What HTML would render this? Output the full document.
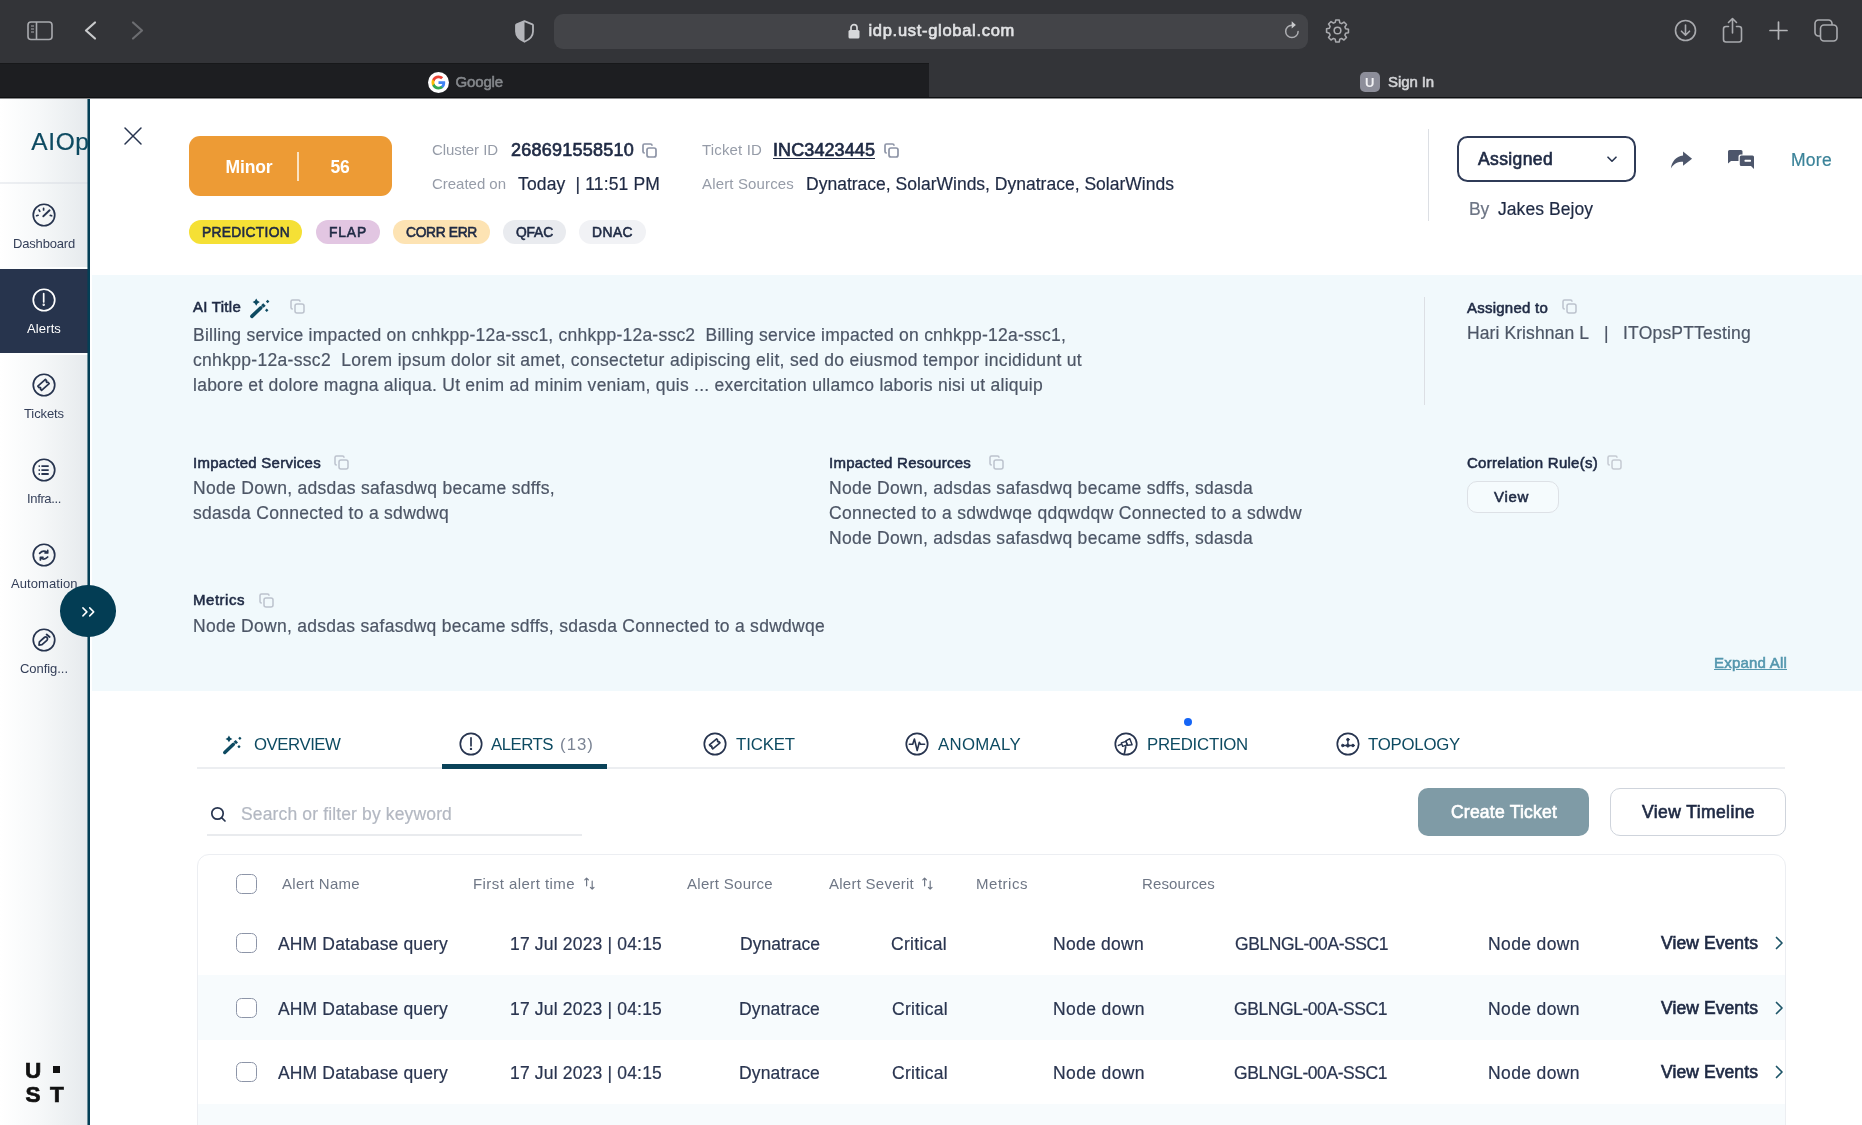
<!DOCTYPE html>
<html lang="en">
<head>
<meta charset="utf-8">
<title>AIOps - Alert Cluster</title>
<style>
*{box-sizing:border-box;margin:0;padding:0}
html,body{width:1862px;height:1125px;overflow:hidden;background:#fff}
body{font-family:"Liberation Sans",sans-serif;position:relative;color:#1f2a44}
#app{position:absolute;left:0;top:0;width:1862px;height:1125px;overflow:hidden;will-change:transform}
.t{position:absolute;white-space:nowrap;display:block}
.abs{position:absolute}
svg{position:absolute;overflow:visible}
/* browser chrome */
#toolbar{position:absolute;left:0;top:0;width:1862px;height:63px;background:#333438}
#urlbar{position:absolute;left:554px;top:14px;width:754px;height:35px;border-radius:9px;background:#434448}
#tabbar{position:absolute;left:0;top:63px;width:1862px;height:35.500px;background:#333438}
#tab1{position:absolute;left:0;top:0;width:929px;height:35.500px;background:#1d1e21;border-top:1px solid #17181a}
#chromeline{z-index:5;position:absolute;left:0;top:97px;width:1862px;height:2px;background:linear-gradient(180deg,#0e0f11 0,#0e0f11 1px,#8a8b8d 1px)}
/* sidebar */
#side{position:absolute;left:0;top:98px;width:88px;height:1027px;background:linear-gradient(90deg,#ffffff 0%,#f6f8f9 45%,#e6eaed 100%)}
#sideborder{position:absolute;left:87px;top:98px;width:3px;height:1027px;background:linear-gradient(90deg,rgba(4,63,86,.55) 0,rgba(4,63,86,.55) 1px,#043f56 1px)}
#side .sep{position:absolute;left:0;top:83.500px;width:88px;height:2px;background:linear-gradient(90deg,#eef0f3,#dfe3e8)}
#side .active{position:absolute;left:0;top:169px;width:88px;height:88px;background:#27344d;border-top:2px solid #fdfefe;border-bottom:2px solid #fdfefe}
#expand{position:absolute;left:60.300px;top:585.300px;width:55.500px;height:51.600px;border-radius:50%;background:#033d54}
/* panel */
#panel{position:absolute;left:90px;top:98px;width:1771px;height:1027px;background:#fff}
#info{position:absolute;left:92px;top:274.500px;width:1770px;height:416.500px;background:#f1f9fc}
.pill{position:absolute;top:220.400px;height:24px;border-radius:12px}
.vline{position:absolute;width:1px;background:#dcdfe4}
.btn{position:absolute;border-radius:10px}
.cb{position:absolute;left:236.200px;width:21px;height:20px;border:1.400px solid #8d95a8;border-radius:5.500px;background:#fff}
.row{position:absolute;left:198px;width:1587px;height:65.200px}
.alt{background:#f7fbfd}
</style>
</head>
<body>
<div id="app">
<header id="toolbar">
<svg style="left:27px;top:21px" width="26" height="20" viewBox="0 0 26 20" fill="none" stroke="#a9aaae" stroke-width="1.600"><rect x="1" y="1" width="24" height="17.5" rx="3"/><path d="M9.5 1v17.5"/><path d="M4 5h3M4 8h3M4 11h3" stroke-width="1.2"/></svg>
<svg style="left:84px;top:21px" width="13" height="19" viewBox="0 0 13 19" fill="none" stroke="#c9cacc" stroke-width="2.2" stroke-linecap="round" stroke-linejoin="round"><path d="M11 1.5L2 9.5l9 8"/></svg>
<svg style="left:131px;top:21px" width="13" height="19" viewBox="0 0 13 19" fill="none" stroke="#6c6d71" stroke-width="2.2" stroke-linecap="round" stroke-linejoin="round"><path d="M2 1.5l9 8-9 8"/></svg>
<svg style="left:515px;top:19.500px" width="19" height="23" viewBox="0 0 19 23"><path d="M9.500 1.200L17.400 4.300c.4.200.6.500.6.900v6.300c0 4.600-3.300 8-8.500 10.300C4.300 19.500 1 16.100 1 11.500V5.200c0-.4.200-.7.600-.9z" fill="none" stroke="#b4b5ba" stroke-width="1.800" stroke-linejoin="round"/><path d="M9.500 1.200v20.600C4.300 19.500 1 16.100 1 11.500V5.200c0-.4.200-.7.600-.9z" fill="#b4b5ba"/></svg>
<div id="urlbar"></div>
<svg style="left:848px;top:23px" width="12" height="16" viewBox="0 0 12 16"><rect x="0.5" y="7" width="11" height="8.5" rx="1.5" fill="#d7d8da"/><path d="M3 7V4.600a3 3 0 0 1 6 0V7" fill="none" stroke="#d7d8da" stroke-width="1.7"/></svg>
<span class="t" style="left:868.5px;top:20px;font-size:16.5px;line-height:21px;font-weight:400;color:#e2e3e5;letter-spacing:0.700px;-webkit-text-stroke:0.62px #e2e3e5;">idp.ust-global.com</span>
<svg style="left:1283px;top:20px" width="18" height="19" viewBox="0 0 18 19"><path d="M8.900 5.200A6.200 6.200 0 1 0 15.100 11.400" fill="none" stroke="#adaeb2" stroke-width="1.500" stroke-linecap="round"/><path d="M8.700 1.300l4.200 3.700-4.200 3.600z" fill="#c9cacc"/></svg>
<svg style="left:1325px;top:18px" width="25" height="25" viewBox="0 0 24 24" fill="none" stroke="#a9aaae" stroke-width="1.500" stroke-linejoin="round"><circle cx="12" cy="12" r="3.200"/><path d="M10.300 2h3.400l.5 2.700 1.700.7 2.300-1.500 2.400 2.400-1.500 2.300.7 1.700 2.700.5v3.400l-2.700.5-.7 1.700 1.500 2.300-2.400 2.400-2.300-1.500-1.700.7-.5 2.700h-3.400l-.5-2.700-1.700-.7-2.300 1.500-2.400-2.400 1.500-2.300-.7-1.700L1.500 13.700v-3.400l2.700-.5.700-1.700-1.500-2.300 2.400-2.400 2.300 1.500 1.700-.7z"/></svg>
<svg style="left:1673.600px;top:19.300px" width="23" height="23" viewBox="0 0 23 23" fill="none" stroke="#a9aaae" stroke-width="1.600" stroke-linecap="round" stroke-linejoin="round"><circle cx="11.500" cy="11.500" r="10"/><path d="M11.500 6v10M7.500 12.200l4 4 4-4"/></svg>
<svg style="left:1722px;top:16.500px" width="21" height="27" viewBox="0 0 21 27" fill="none" stroke="#a9aaae" stroke-width="1.600" stroke-linecap="round" stroke-linejoin="round"><path d="M6.500 9.500H4a2.500 2.500 0 0 0-2.500 2.500v10.500A2.500 2.500 0 0 0 4 25h13a2.500 2.500 0 0 0 2.500-2.500V12A2.500 2.500 0 0 0 17 9.500h-2.500"/><path d="M10.500 16V2M6.500 5.500l4-4 4 4"/></svg>
<svg style="left:1768.800px;top:20.800px" width="19" height="19" viewBox="0 0 19 19" fill="none" stroke="#b4b5b8" stroke-width="1.700" stroke-linecap="round"><path d="M9.500 1v17M1 9.500h17"/></svg>
<svg style="left:1814px;top:19px" width="24" height="23" viewBox="0 0 24 23" fill="none" stroke="#a9aaae" stroke-width="1.600"><rect x="6.500" y="6" width="16.500" height="16" rx="3.500"/><path d="M18 6V4.500A3.500 3.500 0 0 0 14.500 1h-10A3.500 3.500 0 0 0 1 4.500v9A3.500 3.500 0 0 0 4.500 17h2"/></svg>
</header>
<div id="tabbar"><div id="tab1"></div></div><div id="chromeline"></div>
<svg style="left:427.800px;top:71.500px" width="21" height="21" viewBox="0 0 21 21"><circle cx="10.500" cy="10.500" r="10.500" fill="#fff"/><g transform="translate(3.500 3.500) scale(0.583)"><path fill="#4285F4" d="M23.500 12.300c0-.8-.1-1.600-.2-2.300H12v4.500h6.500c-.3 1.500-1.100 2.700-2.400 3.600v3h3.900c2.200-2.100 3.500-5.200 3.500-8.800z"/><path fill="#34A853" d="M12 24c3.200 0 6-1.100 8-2.900l-3.900-3c-1.100.7-2.500 1.200-4.100 1.200-3.100 0-5.800-2.100-6.700-5h-4v3.100C3.300 21.300 7.300 24 12 24z"/><path fill="#FBBC05" d="M5.300 14.300c-.2-.7-.4-1.500-.4-2.300s.1-1.600.4-2.300V6.600h-4C.5 8.200 0 10 0 12s.5 3.800 1.300 5.400z"/><path fill="#EA4335" d="M12 4.800c1.800 0 3.300.6 4.600 1.800l3.400-3.400C17.900 1.200 15.200 0 12 0 7.300 0 3.300 2.700 1.300 6.600l4 3.100c.9-2.800 3.600-4.900 6.700-4.900z"/></g></svg>
<span class="t" style="left:455.5px;top:72px;font-size:15px;line-height:20px;font-weight:400;color:#85888c;letter-spacing:-0.146px;-webkit-text-stroke:0.57px #85888c;">Google</span>
<div class="abs" style="left:1360px;top:72px;width:20px;height:20px;border-radius:5px;background:#8d8e9a"></div>
<span class="t" style="left:1365px;top:74px;font-size:13px;line-height:17px;font-weight:700;color:#f0f0f3;letter-spacing:0.609px;">U</span>
<span class="t" style="left:1388px;top:72px;font-size:15px;line-height:20px;font-weight:400;color:#d3d4d7;letter-spacing:-0.100px;-webkit-text-stroke:0.57px #d3d4d7;">Sign In</span>
<aside>
<div id="side"><div class="sep"></div><div class="active"></div></div>
<div class="abs" style="left:0;top:98px;width:88px;height:80px;overflow:hidden"><span class="t" style="left:31.3px;top:28px;font-size:24.5px;line-height:32px;font-weight:400;color:#0d4a61;letter-spacing:0.621px;-webkit-text-stroke:0.20px #0d4a61;">AIOps</span></div>
<nav>
<svg style="left:31.3px;top:201.9px" width="26" height="26" viewBox="0 0 26 26" fill="none" stroke="#27344f" stroke-width="1.700" stroke-linecap="round" stroke-linejoin="round"><circle cx="13" cy="13" r="10.750"/><path d="M12.300 14.300l6.300-6" stroke-width="1.900"/><path d="M12.600 6.300v1.600M8 7.900l.8 1.400M5.600 13.700l1.500-.4M19.300 13.400l1.400.4" stroke-width="1.700"/></svg>
<span class="t" style="left:13px;top:235px;font-size:13px;line-height:17px;font-weight:400;color:#343f59;letter-spacing:-0.179px;">Dashboard</span>
<svg style="left:31.3px;top:286.9px" width="26" height="26" viewBox="0 0 26 26" fill="none" stroke="#ffffff" stroke-width="1.700" stroke-linecap="round" stroke-linejoin="round"><circle cx="13" cy="13" r="10.750"/><path d="M12.700 6.700v8.300" stroke-width="1.700"/><circle cx="12.700" cy="17.800" r="0.500" stroke-width="1.400"/></svg>
<span class="t" style="left:27px;top:320px;font-size:13px;line-height:17px;font-weight:400;color:#ffffff;letter-spacing:0.128px;">Alerts</span>
<svg style="left:31.3px;top:371.9px" width="26" height="26" viewBox="0 0 26 26" fill="none" stroke="#27344f" stroke-width="1.700" stroke-linecap="round" stroke-linejoin="round"><circle cx="13" cy="13" r="10.750"/><path transform="translate(12.500 12.900) rotate(-42)" d="M-5.100-2.800H5.100V-1a1 1 0 0 0 0 2V2.800H-5.100V1a1 1 0 0 0 0-2z" stroke-width="1.700"/></svg>
<span class="t" style="left:24px;top:405px;font-size:13px;line-height:17px;font-weight:400;color:#343f59;letter-spacing:-0.100px;">Tickets</span>
<svg style="left:31.3px;top:456.9px" width="26" height="26" viewBox="0 0 26 26" fill="none" stroke="#27344f" stroke-width="1.700" stroke-linecap="round" stroke-linejoin="round"><circle cx="13" cy="13" r="10.750"/><path d="M10.400 9.100h7.300M10.400 13.200h7.300M10.400 17h7.300" stroke-width="1.800" stroke-linecap="butt"/><path d="M7.600 9.100h1.300M7.600 13.200h1.300M7.600 17h1.300" stroke-width="1.800" stroke-linecap="butt"/></svg>
<span class="t" style="left:27px;top:490px;font-size:13px;line-height:17px;font-weight:400;color:#343f59;letter-spacing:-0.357px;">Infra...</span>
<svg style="left:31.3px;top:541.9px" width="26" height="26" viewBox="0 0 26 26" fill="none" stroke="#27344f" stroke-width="1.700" stroke-linecap="round" stroke-linejoin="round"><circle cx="13" cy="13" r="10.750"/><g transform="translate(13 13.200) scale(.86) translate(-13 -13.200)"><path d="M7.900 11Q12 6.600 16.600 9.800M17.300 15.300Q13.500 19.300 9.300 16.600" stroke-width="2"/><path d="M17.300 7.600v3h-3M8.800 18.700v-3h3" stroke-width="2"/></g></svg>
<span class="t" style="left:11px;top:575px;font-size:13px;line-height:17px;font-weight:400;color:#343f59;letter-spacing:0.083px;">Automation</span>
<svg style="left:31.3px;top:626.9px" width="26" height="26" viewBox="0 0 26 26" fill="none" stroke="#27344f" stroke-width="1.700" stroke-linecap="round" stroke-linejoin="round"><circle cx="13" cy="13" r="10.750"/><path d="M8 18.100l.4-3.200 4.900-4.400a1.900 1.900 0 0 1 2.600 2.800l-4.900 4.400z" stroke-width="1.700"/><path d="M15.700 7.600l2.900 2.300" stroke-width="1.900"/></svg>
<span class="t" style="left:20px;top:660px;font-size:13px;line-height:17px;font-weight:400;color:#343f59;letter-spacing:-0.047px;">Config...</span>
</nav>
<span class="t" style="left:25px;top:1056px;font-size:22.5px;line-height:29px;font-weight:700;color:#111111;letter-spacing:-0.750px;-webkit-text-stroke:.7px #111;">U</span>
<div class="abs" style="left:53px;top:1066px;width:7px;height:7px;background:#111"></div>
<span class="t" style="left:25.5px;top:1080px;font-size:22.5px;line-height:29px;font-weight:700;color:#111111;letter-spacing:-0.516px;-webkit-text-stroke:.7px #111;">S</span>
<span class="t" style="left:50px;top:1080px;font-size:22.5px;line-height:29px;font-weight:700;color:#111111;letter-spacing:-0.250px;-webkit-text-stroke:.7px #111;">T</span>
<div id="sideborder"></div>
</aside>
<main>
<div id="panel"></div>
<section id="cluster-header">
<svg style="left:124px;top:127.300px" width="18" height="18" viewBox="0 0 18 18" fill="none" stroke="#27344f" stroke-width="1.500" stroke-linecap="round"><path d="M1 1l16 16M17 1L1 17"/></svg>
<div class="abs" style="left:189px;top:136px;width:203px;height:60px;border-radius:11px;background:#ed9b35"></div>
<span class="t" style="left:225.5px;top:156px;font-size:17.5px;line-height:23px;font-weight:700;color:#ffffff;letter-spacing:-0.128px;">Minor</span>
<div class="abs" style="left:297px;top:152px;width:2px;height:29px;background:#fbe3c2"></div>
<span class="t" style="left:330.4px;top:156px;font-size:17.5px;line-height:23px;font-weight:700;color:#ffffff;letter-spacing:-0.034px;">56</span>
<span class="t" style="left:432px;top:140px;font-size:15px;line-height:20px;font-weight:400;color:#969ca8;letter-spacing:-0.069px;">Cluster ID</span>
<span class="t" style="left:511px;top:139px;font-size:18px;line-height:23px;font-weight:400;color:#1f2a44;letter-spacing:0.238px;-webkit-text-stroke:0.68px #1f2a44;">268691558510</span>
<svg style="left:641.7px;top:142.8px" width="15" height="15" viewBox="0 0 15 15" fill="none" stroke="#8d94a6" stroke-width="1.7"><rect x="5" y="5" width="9" height="9" rx="2"/><path d="M10 2.8V2.5A1.5 1.5 0 0 0 8.5 1H2.5A1.5 1.5 0 0 0 1 2.5v6A1.5 1.5 0 0 0 2.5 10h0.3"/></svg>
<span class="t" style="left:432px;top:174px;font-size:15px;line-height:20px;font-weight:400;color:#969ca8;letter-spacing:-0.022px;">Created on</span>
<span class="t" style="left:518px;top:173px;font-size:17.5px;line-height:23px;font-weight:400;color:#1f2a44;letter-spacing:0.151px;-webkit-text-stroke:0.20px #1f2a44;white-space:pre;">Today  | 11:51 PM</span>
<span class="t" style="left:702px;top:140px;font-size:15px;line-height:20px;font-weight:400;color:#969ca8;letter-spacing:0.153px;">Ticket ID</span>
<span class="t" style="left:773px;top:139px;font-size:18px;line-height:23px;font-weight:400;color:#1f2a44;letter-spacing:0.092px;-webkit-text-stroke:0.68px #1f2a44;text-decoration:underline;text-underline-offset:2px;">INC3423445</span>
<svg style="left:883.7px;top:142.8px" width="15" height="15" viewBox="0 0 15 15" fill="none" stroke="#8d94a6" stroke-width="1.7"><rect x="5" y="5" width="9" height="9" rx="2"/><path d="M10 2.8V2.5A1.5 1.5 0 0 0 8.5 1H2.5A1.5 1.5 0 0 0 1 2.5v6A1.5 1.5 0 0 0 2.5 10h0.3"/></svg>
<span class="t" style="left:702px;top:174px;font-size:15px;line-height:20px;font-weight:400;color:#969ca8;letter-spacing:0.150px;">Alert Sources</span>
<span class="t" style="left:806px;top:173px;font-size:17.5px;line-height:23px;font-weight:400;color:#1f2a44;letter-spacing:0.008px;-webkit-text-stroke:0.20px #1f2a44;">Dynatrace, SolarWinds, Dynatrace, SolarWinds</span>
<div class="pill" style="left:189px;width:113px;background:#f5e035"></div>
<span class="t" style="left:202px;top:224px;font-size:13.8px;line-height:18px;font-weight:400;color:#1f2a44;letter-spacing:0.291px;-webkit-text-stroke:0.57px #1f2a44;">PREDICTION</span>
<div class="pill" style="left:316px;width:64px;background:#e2c6e2"></div>
<span class="t" style="left:329px;top:224px;font-size:13.8px;line-height:18px;font-weight:400;color:#1f2a44;letter-spacing:0.871px;-webkit-text-stroke:0.57px #1f2a44;">FLAP</span>
<div class="pill" style="left:393px;width:97px;background:#fde3b3"></div>
<span class="t" style="left:406px;top:224px;font-size:13.8px;line-height:18px;font-weight:400;color:#1f2a44;letter-spacing:-0.324px;-webkit-text-stroke:0.57px #1f2a44;">CORR ERR</span>
<div class="pill" style="left:503px;width:63px;background:#e9ebef"></div>
<span class="t" style="left:516px;top:224px;font-size:13.8px;line-height:18px;font-weight:400;color:#1f2a44;letter-spacing:-0.145px;-webkit-text-stroke:0.57px #1f2a44;">QFAC</span>
<div class="pill" style="left:579px;width:67px;background:#f1f2f5"></div>
<span class="t" style="left:592px;top:224px;font-size:13.8px;line-height:18px;font-weight:400;color:#1f2a44;letter-spacing:0.477px;-webkit-text-stroke:0.57px #1f2a44;">DNAC</span>
<div class="vline" style="left:1427.500px;top:129px;height:92px"></div>
<div class="abs" style="left:1457px;top:136px;width:179px;height:46px;border:2px solid #2f3b57;border-radius:10.500px;background:#fff"></div>
<span class="t" style="left:1478px;top:148px;font-size:17.5px;line-height:23px;font-weight:400;color:#1f2a44;letter-spacing:0.375px;-webkit-text-stroke:0.66px #1f2a44;">Assigned</span>
<svg style="left:1607px;top:156px" width="10" height="7" viewBox="0 0 10 7" fill="none" stroke="#27344f" stroke-width="1.600" stroke-linecap="round" stroke-linejoin="round"><path d="M1 1.200l4 4 4-4"/></svg>
<svg style="left:1669.500px;top:151.300px" width="22.500" height="18" viewBox="0 0 25 20"><path d="M14.500 .5l10 8-10 8v-4.600C8.500 11.900 4 14 1 19.500 1.800 12 6.500 6 14.500 5z" fill="#4d566b"/></svg>
<svg style="left:1727.500px;top:150.300px" width="26" height="19" viewBox="0 0 26 19"><path d="M0 1.500A1.500 1.500 0 0 1 1.500 0h11.500A1.500 1.500 0 0 1 14.500 1.500V4.500H12.500A2 2 0 0 0 10.500 6.500V11H3L0 13.600z" fill="#4d566b"/><path d="M11.800 7A1.500 1.500 0 0 1 13.300 5.500h11.200A1.500 1.500 0 0 1 26 7V19l-3-3H13.300A1.500 1.500 0 0 1 11.800 14.500z" fill="#4d566b"/><rect x="16.500" y="9.700" width="6.500" height="2" rx=".6" fill="#fff"/></svg>
<span class="t" style="left:1791px;top:149px;font-size:17.5px;line-height:23px;font-weight:400;color:#3b8399;letter-spacing:0.281px;-webkit-text-stroke:0.20px #3b8399;">More</span>
<span class="t" style="left:1469px;top:198px;font-size:17.5px;line-height:23px;font-weight:400;color:#6d7585;letter-spacing:-0.219px;-webkit-text-stroke:0.20px #6d7585;">By</span>
<span class="t" style="left:1498px;top:198px;font-size:17.5px;line-height:23px;font-weight:400;color:#1f2a44;letter-spacing:0.058px;-webkit-text-stroke:0.20px #1f2a44;">Jakes Bejoy</span>
</section>
<section id="details">
<div id="info"></div>
<span class="t" style="left:193px;top:297px;font-size:15px;line-height:20px;font-weight:400;color:#1f2a44;letter-spacing:0.268px;-webkit-text-stroke:0.57px #1f2a44;">AI Title</span>
<svg style="left:250.2px;top:297.5px" width="20.4" height="20.4" viewBox="0 0 20 20" fill="#0d4a61" stroke="none"><path d="M1.800 18L10.700 9.600" stroke="#0d4a61" stroke-width="3.500" stroke-linecap="round" fill="none"/><path d="M12.100 8.300L14.200 6.300" stroke="#0d4a61" stroke-width="3.500" stroke-linecap="butt" fill="none"/><path d="M6.100 .5L7.400 2.700 9.600 4 7.400 5.300 6.100 7.500 4.800 5.300 2.600 4 4.800 2.700z"/><path d="M17.300 1.700l1.700 1.700-1.700 1.700-1.700-1.700z"/><path d="M16.400 10.300l1.700 1.700-1.700 1.700-1.700-1.700z"/></svg>
<svg style="left:290.1px;top:298.9px" width="15" height="15" viewBox="0 0 15 15" fill="none" stroke="#bcc2cd" stroke-width="1.5"><rect x="5" y="5" width="9" height="9" rx="2"/><path d="M10 2.8V2.5A1.5 1.5 0 0 0 8.5 1H2.5A1.5 1.5 0 0 0 1 2.5v6A1.5 1.5 0 0 0 2.5 10h0.3"/></svg>
<span class="t" style="left:193px;top:324px;font-size:17.5px;line-height:23px;font-weight:400;color:#4d5666;letter-spacing:0.234px;-webkit-text-stroke:0.20px #4d5666;white-space:pre;">Billing service impacted on cnhkpp-12a-ssc1, cnhkpp-12a-ssc2  Billing service impacted on cnhkpp-12a-ssc1,</span>
<span class="t" style="left:193px;top:349px;font-size:17.5px;line-height:23px;font-weight:400;color:#4d5666;letter-spacing:0.312px;-webkit-text-stroke:0.20px #4d5666;white-space:pre;">cnhkpp-12a-ssc2  Lorem ipsum dolor sit amet, consectetur adipiscing elit, sed do eiusmod tempor incididunt ut</span>
<span class="t" style="left:193px;top:374px;font-size:17.5px;line-height:23px;font-weight:400;color:#4d5666;letter-spacing:0.257px;-webkit-text-stroke:0.20px #4d5666;">labore et dolore magna aliqua. Ut enim ad minim veniam, quis ... exercitation ullamco laboris nisi ut aliquip</span>
<div class="vline" style="left:1424px;top:297px;height:108px"></div>
<span class="t" style="left:1467px;top:298px;font-size:15px;line-height:20px;font-weight:400;color:#1f2a44;letter-spacing:0.237px;-webkit-text-stroke:0.57px #1f2a44;">Assigned to</span>
<svg style="left:1562.1px;top:298.9px" width="15" height="15" viewBox="0 0 15 15" fill="none" stroke="#bcc2cd" stroke-width="1.5"><rect x="5" y="5" width="9" height="9" rx="2"/><path d="M10 2.8V2.5A1.5 1.5 0 0 0 8.5 1H2.5A1.5 1.5 0 0 0 1 2.5v6A1.5 1.5 0 0 0 2.5 10h0.3"/></svg>
<span class="t" style="left:1467px;top:322px;font-size:17.5px;line-height:23px;font-weight:400;color:#4d5666;letter-spacing:0.092px;-webkit-text-stroke:0.20px #4d5666;">Hari Krishnan L</span>
<span class="t" style="left:1604px;top:322px;font-size:17.5px;line-height:23px;font-weight:400;color:#4d5666;letter-spacing:0.453px;-webkit-text-stroke:0.20px #4d5666;">|</span>
<span class="t" style="left:1623px;top:322px;font-size:17.5px;line-height:23px;font-weight:400;color:#4d5666;letter-spacing:0.204px;-webkit-text-stroke:0.20px #4d5666;">ITOpsPTTesting</span>
<span class="t" style="left:193px;top:453px;font-size:15px;line-height:20px;font-weight:400;color:#1f2a44;letter-spacing:0.271px;-webkit-text-stroke:0.57px #1f2a44;">Impacted Services</span>
<svg style="left:334.1px;top:454.9px" width="15" height="15" viewBox="0 0 15 15" fill="none" stroke="#bcc2cd" stroke-width="1.5"><rect x="5" y="5" width="9" height="9" rx="2"/><path d="M10 2.8V2.5A1.5 1.5 0 0 0 8.5 1H2.5A1.5 1.5 0 0 0 1 2.5v6A1.5 1.5 0 0 0 2.5 10h0.3"/></svg>
<span class="t" style="left:193px;top:477px;font-size:17.5px;line-height:23px;font-weight:400;color:#4d5666;letter-spacing:0.303px;-webkit-text-stroke:0.20px #4d5666;">Node Down, adsdas safasdwq became sdffs,</span>
<span class="t" style="left:193px;top:502px;font-size:17.5px;line-height:23px;font-weight:400;color:#4d5666;letter-spacing:0.283px;-webkit-text-stroke:0.20px #4d5666;">sdasda Connected to a sdwdwq</span>
<span class="t" style="left:829px;top:453px;font-size:15px;line-height:20px;font-weight:400;color:#1f2a44;letter-spacing:0.246px;-webkit-text-stroke:0.57px #1f2a44;">Impacted Resources</span>
<svg style="left:989.1px;top:454.9px" width="15" height="15" viewBox="0 0 15 15" fill="none" stroke="#bcc2cd" stroke-width="1.5"><rect x="5" y="5" width="9" height="9" rx="2"/><path d="M10 2.8V2.5A1.5 1.5 0 0 0 8.5 1H2.5A1.5 1.5 0 0 0 1 2.5v6A1.5 1.5 0 0 0 2.5 10h0.3"/></svg>
<span class="t" style="left:829px;top:477px;font-size:17.5px;line-height:23px;font-weight:400;color:#4d5666;letter-spacing:0.273px;-webkit-text-stroke:0.20px #4d5666;">Node Down, adsdas safasdwq became sdffs, sdasda</span>
<span class="t" style="left:829px;top:502px;font-size:17.5px;line-height:23px;font-weight:400;color:#4d5666;letter-spacing:0.309px;-webkit-text-stroke:0.20px #4d5666;">Connected to a sdwdwqe qdqwdqw Connected to a sdwdw</span>
<span class="t" style="left:829px;top:527px;font-size:17.5px;line-height:23px;font-weight:400;color:#4d5666;letter-spacing:0.273px;-webkit-text-stroke:0.20px #4d5666;">Node Down, adsdas safasdwq became sdffs, sdasda</span>
<span class="t" style="left:1467px;top:453px;font-size:15px;line-height:20px;font-weight:400;color:#1f2a44;letter-spacing:0.270px;-webkit-text-stroke:0.57px #1f2a44;">Correlation Rule(s)</span>
<svg style="left:1607.1px;top:454.9px" width="15" height="15" viewBox="0 0 15 15" fill="none" stroke="#c5cad2" stroke-width="1.5"><rect x="5" y="5" width="9" height="9" rx="2"/><path d="M10 2.8V2.5A1.5 1.5 0 0 0 8.5 1H2.5A1.5 1.5 0 0 0 1 2.5v6A1.5 1.5 0 0 0 2.5 10h0.3"/></svg>
<div class="btn" style="left:1467.400px;top:480.500px;width:91.300px;height:32.200px;background:#f5fbfd;border:1.300px solid #dde1e6"></div>
<span class="t" style="left:1494px;top:487px;font-size:15px;line-height:20px;font-weight:400;color:#1f2a44;letter-spacing:0.688px;-webkit-text-stroke:0.57px #1f2a44;">View</span>
<span class="t" style="left:193px;top:590px;font-size:15px;line-height:20px;font-weight:400;color:#1f2a44;letter-spacing:0.522px;-webkit-text-stroke:0.57px #1f2a44;">Metrics</span>
<svg style="left:259.1px;top:592.9px" width="15" height="15" viewBox="0 0 15 15" fill="none" stroke="#bcc2cd" stroke-width="1.5"><rect x="5" y="5" width="9" height="9" rx="2"/><path d="M10 2.8V2.5A1.5 1.5 0 0 0 8.5 1H2.5A1.5 1.5 0 0 0 1 2.5v6A1.5 1.5 0 0 0 2.5 10h0.3"/></svg>
<span class="t" style="left:193px;top:615px;font-size:17.5px;line-height:23px;font-weight:400;color:#4d5666;letter-spacing:0.278px;-webkit-text-stroke:0.20px #4d5666;">Node Down, adsdas safasdwq became sdffs, sdasda Connected to a sdwdwqe</span>
<span class="t" style="left:1714px;top:653px;font-size:15px;line-height:20px;font-weight:400;color:#5497ae;letter-spacing:0.211px;-webkit-text-stroke:0.57px #5497ae;text-decoration:underline;">Expand All</span>
</section>
<section id="tabs">
<div class="abs" style="left:197px;top:767.200px;width:1588px;height:2px;background:#eceef1"></div>
<div class="abs" style="left:442.300px;top:764.100px;width:164.500px;height:4.800px;background:#0a4359"></div>
<svg style="left:223.4px;top:735.3px" width="19.5" height="19.5" viewBox="0 0 20 20" fill="#0d4a61" stroke="none"><path d="M1.800 18L10.700 9.600" stroke="#0d4a61" stroke-width="3.500" stroke-linecap="round" fill="none"/><path d="M12.100 8.300L14.200 6.300" stroke="#0d4a61" stroke-width="3.500" stroke-linecap="butt" fill="none"/><path d="M6.100 .5L7.400 2.700 9.600 4 7.400 5.300 6.100 7.500 4.800 5.300 2.600 4 4.800 2.700z"/><path d="M17.300 1.700l1.700 1.700-1.700 1.700-1.700-1.700z"/><path d="M16.400 10.300l1.700 1.700-1.700 1.700-1.700-1.700z"/></svg>
<span class="t" style="left:254px;top:734px;font-size:16.8px;line-height:22px;font-weight:400;color:#0d4a61;letter-spacing:-0.457px;">OVERVIEW</span>
<svg style="left:458.5px;top:732.3px" width="24" height="24" viewBox="0 0 24 24" fill="none" stroke="#27344f" stroke-width="1.700" stroke-linecap="round" stroke-linejoin="round"><circle cx="12" cy="12" r="10.700"/><path d="M12 5.800v8" stroke-width="1.700"/><circle cx="12" cy="16.900" r="0.500" stroke-width="1.400"/></svg>
<span class="t" style="left:491px;top:734px;font-size:16.8px;line-height:22px;font-weight:400;color:#0d4a61;letter-spacing:-0.497px;">ALERTS</span>
<span class="t" style="left:560px;top:734px;font-size:16.8px;line-height:22px;font-weight:400;color:#7b8494;letter-spacing:1.039px;">(13)</span>
<svg style="left:702.8px;top:732px" width="24" height="24" viewBox="0 0 24 24" fill="none" stroke="#27344f" stroke-width="1.700" stroke-linecap="round" stroke-linejoin="round"><circle cx="12" cy="12" r="10.700"/><path transform="translate(11.700 11.900) rotate(-40)" d="M-4.700-2.600H4.700V-.9a.9 .9 0 0 0 0 1.800V2.600H-4.700V.9a.9 .9 0 0 0 0-1.800z" stroke-width="1.600"/></svg>
<span class="t" style="left:736px;top:734px;font-size:16.8px;line-height:22px;font-weight:400;color:#0d4a61;letter-spacing:-0.112px;">TICKET</span>
<svg style="left:905.3px;top:732.1px" width="24" height="24" viewBox="0 0 24 24" fill="none" stroke="#27344f" stroke-width="1.700" stroke-linecap="round" stroke-linejoin="round"><circle cx="12" cy="12" r="10.700"/><path d="M4.300 12.300h3.400l1.700-5.300 2.800 11.500 2.100-8.300 1.300 2.100h4" stroke-width="1.600"/></svg>
<span class="t" style="left:938px;top:734px;font-size:16.8px;line-height:22px;font-weight:400;color:#0d4a61;letter-spacing:0.310px;">ANOMALY</span>
<svg style="left:1114px;top:731.9px" width="24" height="24" viewBox="0 0 24 24" fill="none" stroke="#27344f" stroke-width="1.700" stroke-linecap="round" stroke-linejoin="round"><circle cx="12" cy="12" r="10.700"/><path d="M4.400 13.400l3-1.100" stroke-width="1.500"/><path d="M7.400 10.900l4.500-1.600 1.300 3.500-4.500 1.600z" stroke-width="1.400"/><path d="M11.900 8.900l3.900-2.200 2.300 6.100-4.600.5z" stroke-width="1.400"/><path d="M11.700 14.800l-1.200 6.300" stroke-width="1.700"/></svg>
<span class="t" style="left:1147px;top:734px;font-size:16.8px;line-height:22px;font-weight:400;color:#0d4a61;letter-spacing:-0.250px;">PREDICTION</span>
<div class="abs" style="left:1184.300px;top:717.500px;width:8.200px;height:8.200px;border-radius:50%;background:#1565f6"></div>
<svg style="left:1335.5px;top:732px" width="24" height="24" viewBox="0 0 24 24" fill="none" stroke="#27344f" stroke-width="1.700" stroke-linecap="round" stroke-linejoin="round"><circle cx="12" cy="12" r="10.700"/><circle cx="11.900" cy="7.600" r="1.300" fill="#27344f" stroke-width=".9"/><circle cx="6.800" cy="13.500" r="1.300" fill="#27344f" stroke-width=".9"/><circle cx="17" cy="13.500" r="1.300" fill="#27344f" stroke-width=".9"/><path d="M11.900 11.600l2.100 2.100-2.100 1.700-2.100-1.700z" fill="#27344f" stroke-width=".6"/><path d="M11.900 8v5M6.800 13.500h10.200" stroke-width="1.300"/></svg>
<span class="t" style="left:1368px;top:734px;font-size:16.8px;line-height:22px;font-weight:400;color:#0d4a61;letter-spacing:-0.236px;">TOPOLOGY</span>
</section>
<section id="toolbar2">
<svg style="left:210px;top:806px" width="17" height="17" viewBox="0 0 17 17" fill="none" stroke="#27344f" stroke-width="1.700" stroke-linecap="round"><circle cx="7.500" cy="7.500" r="5.700"/><path d="M11.800 11.800l3.200 3.200"/></svg>
<span class="t" style="left:241px;top:803px;font-size:17.5px;line-height:23px;font-weight:400;color:#b3b8c2;letter-spacing:0.142px;-webkit-text-stroke:0.20px #b3b8c2;">Search or filter by keyword</span>
<div class="abs" style="left:207.300px;top:834px;width:375px;height:1.800px;background:#e9ebee"></div>
<div class="btn" style="left:1418.300px;top:788px;width:170.700px;height:47.500px;background:#7f9ba6"></div>
<span class="t" style="left:1451px;top:801px;font-size:17.5px;line-height:23px;font-weight:400;color:#ffffff;letter-spacing:0.222px;-webkit-text-stroke:0.66px #ffffff;">Create Ticket</span>
<div class="btn" style="left:1610px;top:788px;width:176px;height:47.500px;background:#fff;border:1.300px solid #cfd4dc"></div>
<span class="t" style="left:1642px;top:801px;font-size:17.5px;line-height:23px;font-weight:400;color:#1f2a44;letter-spacing:0.412px;-webkit-text-stroke:0.66px #1f2a44;">View Timeline</span>
</section>
<section id="alerts-table">
<div class="abs" style="left:197px;top:854px;width:1589px;height:300px;border:1.500px solid #eceef2;border-radius:12px;background:#fff"></div>
<div class="row alt" style="top:975px"></div>
<div class="row alt" style="top:1104px"></div>
<div class="cb" style="top:874.200px"></div>
<span class="t" style="left:282px;top:874px;font-size:15px;line-height:20px;font-weight:400;color:#6f7786;letter-spacing:0.297px;">Alert Name</span>
<span class="t" style="left:473px;top:874px;font-size:15px;line-height:20px;font-weight:400;color:#6f7786;letter-spacing:0.437px;">First alert time</span>
<svg style="left:583px;top:877px" width="13" height="13" viewBox="0 0 13 13" fill="none" stroke="#6f7786" stroke-width="1.200" stroke-linecap="round" stroke-linejoin="round"><path d="M3.600 8.800V1.100M1.800 2.900l1.800-1.800 1.800 1.800"/><path d="M9.200 4.200v7.900M7.400 10.300l1.800 1.800 1.800-1.800"/></svg>
<span class="t" style="left:687px;top:874px;font-size:15px;line-height:20px;font-weight:400;color:#6f7786;letter-spacing:0.288px;">Alert Source</span>
<span class="t" style="left:829px;top:874px;font-size:15px;line-height:20px;font-weight:400;color:#6f7786;letter-spacing:0.254px;">Alert Severit</span>
<svg style="left:921px;top:877px" width="13" height="13" viewBox="0 0 13 13" fill="none" stroke="#6f7786" stroke-width="1.200" stroke-linecap="round" stroke-linejoin="round"><path d="M3.600 8.800V1.100M1.800 2.900l1.800-1.800 1.800 1.800"/><path d="M9.200 4.200v7.900M7.400 10.300l1.800 1.800 1.800-1.800"/></svg>
<span class="t" style="left:976px;top:874px;font-size:15px;line-height:20px;font-weight:400;color:#6f7786;letter-spacing:0.522px;">Metrics</span>
<span class="t" style="left:1142px;top:874px;font-size:15px;line-height:20px;font-weight:400;color:#6f7786;letter-spacing:0.144px;">Resources</span>
<div class="cb" style="top:933px"></div>
<span class="t" style="left:278px;top:933px;font-size:17.5px;line-height:23px;font-weight:400;color:#2a3550;letter-spacing:0.149px;-webkit-text-stroke:0.20px #2a3550;">AHM Database query</span>
<span class="t" style="left:510px;top:933px;font-size:17.5px;line-height:23px;font-weight:400;color:#2a3550;letter-spacing:0.181px;-webkit-text-stroke:0.20px #2a3550;">17 Jul 2023 | 04:15</span>
<span class="t" style="left:740px;top:933px;font-size:17.5px;line-height:23px;font-weight:400;color:#2a3550;letter-spacing:0.026px;-webkit-text-stroke:0.20px #2a3550;">Dynatrace</span>
<span class="t" style="left:891px;top:933px;font-size:17.5px;line-height:23px;font-weight:400;color:#2a3550;letter-spacing:0.314px;-webkit-text-stroke:0.20px #2a3550;">Critical</span>
<span class="t" style="left:1053px;top:933px;font-size:17.5px;line-height:23px;font-weight:400;color:#2a3550;letter-spacing:0.273px;-webkit-text-stroke:0.20px #2a3550;">Node down</span>
<span class="t" style="left:1235px;top:933px;font-size:17.5px;line-height:23px;font-weight:400;color:#2a3550;letter-spacing:-0.434px;-webkit-text-stroke:0.20px #2a3550;">GBLNGL-00A-SSC1</span>
<span class="t" style="left:1488px;top:933px;font-size:17.5px;line-height:23px;font-weight:400;color:#2a3550;letter-spacing:0.384px;-webkit-text-stroke:0.20px #2a3550;">Node down</span>
<span class="t" style="left:1661px;top:932px;font-size:17.5px;line-height:23px;font-weight:400;color:#1f2a44;letter-spacing:0.092px;-webkit-text-stroke:0.66px #1f2a44;">View Events</span>
<svg style="left:1775px;top:936px" width="9" height="14" viewBox="0 0 9 14" fill="none" stroke="#1d5468" stroke-width="1.700" stroke-linecap="round" stroke-linejoin="round"><path d="M1.500 1.500l5.500 5.500-5.500 5.500"/></svg>
<div class="cb" style="top:997.5px"></div>
<span class="t" style="left:278px;top:998px;font-size:17.5px;line-height:23px;font-weight:400;color:#2a3550;letter-spacing:0.149px;-webkit-text-stroke:0.20px #2a3550;">AHM Database query</span>
<span class="t" style="left:510px;top:998px;font-size:17.5px;line-height:23px;font-weight:400;color:#2a3550;letter-spacing:0.181px;-webkit-text-stroke:0.20px #2a3550;">17 Jul 2023 | 04:15</span>
<span class="t" style="left:739px;top:998px;font-size:17.5px;line-height:23px;font-weight:400;color:#2a3550;letter-spacing:0.137px;-webkit-text-stroke:0.20px #2a3550;">Dynatrace</span>
<span class="t" style="left:892px;top:998px;font-size:17.5px;line-height:23px;font-weight:400;color:#2a3550;letter-spacing:0.314px;-webkit-text-stroke:0.20px #2a3550;">Critical</span>
<span class="t" style="left:1053px;top:998px;font-size:17.5px;line-height:23px;font-weight:400;color:#2a3550;letter-spacing:0.384px;-webkit-text-stroke:0.20px #2a3550;">Node down</span>
<span class="t" style="left:1234px;top:998px;font-size:17.5px;line-height:23px;font-weight:400;color:#2a3550;letter-spacing:-0.434px;-webkit-text-stroke:0.20px #2a3550;">GBLNGL-00A-SSC1</span>
<span class="t" style="left:1488px;top:998px;font-size:17.5px;line-height:23px;font-weight:400;color:#2a3550;letter-spacing:0.384px;-webkit-text-stroke:0.20px #2a3550;">Node down</span>
<span class="t" style="left:1661px;top:997px;font-size:17.5px;line-height:23px;font-weight:400;color:#1f2a44;letter-spacing:0.092px;-webkit-text-stroke:0.66px #1f2a44;">View Events</span>
<svg style="left:1775px;top:1000.5px" width="9" height="14" viewBox="0 0 9 14" fill="none" stroke="#1d5468" stroke-width="1.700" stroke-linecap="round" stroke-linejoin="round"><path d="M1.500 1.500l5.500 5.500-5.500 5.500"/></svg>
<div class="cb" style="top:1062px"></div>
<span class="t" style="left:278px;top:1062px;font-size:17.5px;line-height:23px;font-weight:400;color:#2a3550;letter-spacing:0.149px;-webkit-text-stroke:0.20px #2a3550;">AHM Database query</span>
<span class="t" style="left:510px;top:1062px;font-size:17.5px;line-height:23px;font-weight:400;color:#2a3550;letter-spacing:0.181px;-webkit-text-stroke:0.20px #2a3550;">17 Jul 2023 | 04:15</span>
<span class="t" style="left:739px;top:1062px;font-size:17.5px;line-height:23px;font-weight:400;color:#2a3550;letter-spacing:0.137px;-webkit-text-stroke:0.20px #2a3550;">Dynatrace</span>
<span class="t" style="left:892px;top:1062px;font-size:17.5px;line-height:23px;font-weight:400;color:#2a3550;letter-spacing:0.314px;-webkit-text-stroke:0.20px #2a3550;">Critical</span>
<span class="t" style="left:1053px;top:1062px;font-size:17.5px;line-height:23px;font-weight:400;color:#2a3550;letter-spacing:0.384px;-webkit-text-stroke:0.20px #2a3550;">Node down</span>
<span class="t" style="left:1234px;top:1062px;font-size:17.5px;line-height:23px;font-weight:400;color:#2a3550;letter-spacing:-0.434px;-webkit-text-stroke:0.20px #2a3550;">GBLNGL-00A-SSC1</span>
<span class="t" style="left:1488px;top:1062px;font-size:17.5px;line-height:23px;font-weight:400;color:#2a3550;letter-spacing:0.384px;-webkit-text-stroke:0.20px #2a3550;">Node down</span>
<span class="t" style="left:1661px;top:1061px;font-size:17.5px;line-height:23px;font-weight:400;color:#1f2a44;letter-spacing:0.092px;-webkit-text-stroke:0.66px #1f2a44;">View Events</span>
<svg style="left:1775px;top:1065px" width="9" height="14" viewBox="0 0 9 14" fill="none" stroke="#1d5468" stroke-width="1.700" stroke-linecap="round" stroke-linejoin="round"><path d="M1.500 1.500l5.500 5.500-5.500 5.500"/></svg>
</section>
</main>
<div id="expand"></div>
<svg style="left:82px;top:606.500px" width="13" height="10" viewBox="0 0 13 10" fill="none" stroke="#ffffff" stroke-width="1.500" stroke-linecap="round" stroke-linejoin="round"><path d="M.9 .9l4 4-4 4M7.700 .9l4 4-4 4"/></svg>
</div>
</body>
</html>
